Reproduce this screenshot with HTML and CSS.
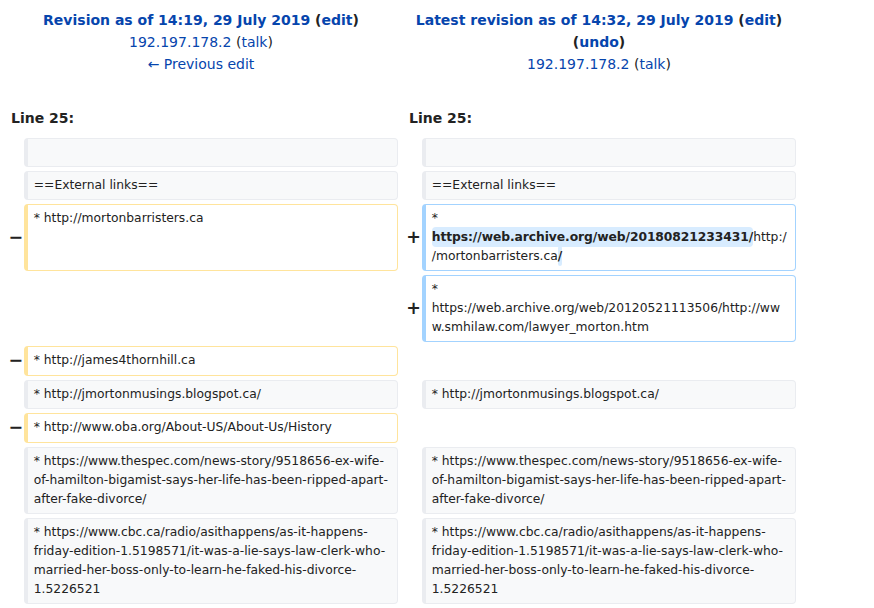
FILE: index.html
```html
<!DOCTYPE html>
<html lang="en">
<head>
<meta charset="utf-8">
<title>Difference between revisions</title>
<link rel="stylesheet" href="styles.css">
</head>
<body>
<table class="diff">
  <colgroup>
    <col class="col-marker">
    <col class="col-content">
    <col class="col-marker">
    <col class="col-content">
  </colgroup>
  <tbody>
    <tr>
      <td colspan="2" class="diff-title">
        <div><strong><a href="#">Revision as of 14:19, 29 July 2019</a> <span>(<a href="#">edit</a>)</span></strong></div>
        <div><a href="#">192.197.178.2</a> <span>(<a href="#">talk</a>)</span></div>
        <div><a href="#">← Previous edit</a></div>
      </td>
      <td colspan="2" class="diff-title">
        <div><strong><a href="#">Latest revision as of 14:32, 29 July 2019</a> <span>(<a href="#">edit</a>)</span> <span>(<a href="#">undo</a>)</span></strong></div>
        <div><a href="#">192.197.178.2</a> <span>(<a href="#">talk</a>)</span></div>
      </td>
    </tr>
    <tr>
      <td colspan="2" class="diff-lineno">Line 25:</td>
      <td colspan="2" class="diff-lineno">Line 25:</td>
    </tr>
    <tr>
      <td class="diff-marker"></td>
      <td class="diff-line ctx"><br></td>
      <td class="diff-marker"></td>
      <td class="diff-line ctx"><br></td>
    </tr>
    <tr>
      <td class="diff-marker"></td>
      <td class="diff-line ctx"><div>==External links==</div></td>
      <td class="diff-marker"></td>
      <td class="diff-line ctx"><div>==External links==</div></td>
    </tr>
    <tr>
      <td class="diff-marker">−</td>
      <td class="diff-line del"><div>* http://mortonbarristers.ca</div></td>
      <td class="diff-marker">+</td>
      <td class="diff-line add"><div>* <ins class="diffchange">https://web.archive.org/web/20180821233431/</ins>http://mortonbarristers.ca<ins class="diffchange">/</ins></div></td>
    </tr>
    <tr>
      <td colspan="2" class="diff-empty"></td>
      <td class="diff-marker">+</td>
      <td class="diff-line add"><div>* https://web.archive.org/web/20120521113506/http://www.smhilaw.com/lawyer_morton.htm</div></td>
    </tr>
    <tr>
      <td class="diff-marker">−</td>
      <td class="diff-line del"><div>* http://james4thornhill.ca</div></td>
      <td colspan="2" class="diff-empty"></td>
    </tr>
    <tr>
      <td class="diff-marker"></td>
      <td class="diff-line ctx"><div>* http://jmortonmusings.blogspot.ca/</div></td>
      <td class="diff-marker"></td>
      <td class="diff-line ctx"><div>* http://jmortonmusings.blogspot.ca/</div></td>
    </tr>
    <tr>
      <td class="diff-marker">−</td>
      <td class="diff-line del"><div>* http://www.oba.org/About-US/About-Us/History</div></td>
      <td colspan="2" class="diff-empty"></td>
    </tr>
    <tr>
      <td class="diff-marker"></td>
      <td class="diff-line ctx"><div>* https://www.thespec.com/news-story/9518656-ex-wife-of-hamilton-bigamist-says-her-life-has-been-ripped-apart-after-fake-divorce/</div></td>
      <td class="diff-marker"></td>
      <td class="diff-line ctx"><div>* https://www.thespec.com/news-story/9518656-ex-wife-of-hamilton-bigamist-says-her-life-has-been-ripped-apart-after-fake-divorce/</div></td>
    </tr>
    <tr>
      <td class="diff-marker"></td>
      <td class="diff-line ctx"><div>* https://www.cbc.ca/radio/asithappens/as-it-happens-friday-edition-1.5198571/it-was-a-lie-says-law-clerk-who-married-her-boss-only-to-learn-he-faked-his-divorce-1.5226521</div></td>
      <td class="diff-marker"></td>
      <td class="diff-line ctx"><div>* https://www.cbc.ca/radio/asithappens/as-it-happens-friday-edition-1.5198571/it-was-a-lie-says-law-clerk-who-married-her-boss-only-to-learn-he-faked-his-divorce-1.5226521</div></td>
    </tr>
  </tbody>
</table>
</body>
</html>
```

FILE: styles.css
```css
html, body {
  margin: 0;
  padding: 0;
  background: #ffffff;
}

body {
  font-family: "DejaVu Sans", sans-serif;
  font-size: 14px;
  line-height: 1.6;
  color: #222222;
}

a {
  color: #0645ad;
  text-decoration: none;
}

.diff {
  width: 800px;
  border: none;
  border-spacing: 4px;
  margin: 0;
  table-layout: fixed;
}

.col-marker {
  width: 2%;
}

.col-content {
  width: 48%;
}

.diff td {
  padding: 4.62px 7px;
  overflow-wrap: break-word;
}

.diff td.diff-title {
  text-align: center;
  vertical-align: top;
  padding: 4.62px 7px 22.18px;
}

.diff td.diff-lineno {
  font-weight: bold;
  padding: 5.5px 7px 4.1px;
}

.diff td.diff-marker {
  text-align: right;
  font-weight: bold;
  font-size: 17.5px;
  line-height: 21px;
  padding: 4.5px 4.375px;
}

.diff td.diff-line {
  font-size: 12.32px;
  line-height: 19px;
  padding: 4px 6.16px;
  vertical-align: top;
  white-space: pre-wrap;
  overflow-wrap: break-word;
  border-style: solid;
  border-width: 1px 1px 1px 4px;
  border-radius: 4px;
}

.diff td.ctx {
  background: #f8f9fa;
  border-color: #eaecf0;
  color: #222222;
}

.diff td.del {
  border-color: #ffe49c;
}

.diff td.add {
  border-color: #a3d3ff;
}

.diffchange {
  font-weight: bold;
  text-decoration: none;
  letter-spacing: -0.08px;
  border-radius: 4px;
  padding: 0.25em 0;
}

.add .diffchange {
  background: #d8ecff;
}

.del .diffchange {
  background: #feeec8;
}
```
